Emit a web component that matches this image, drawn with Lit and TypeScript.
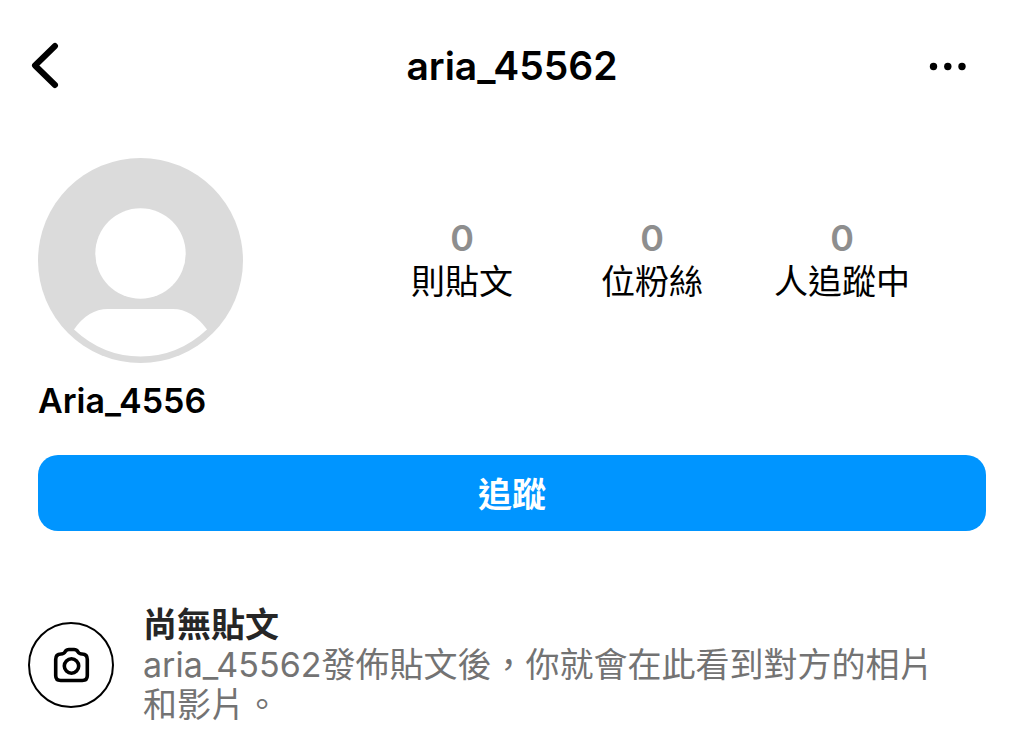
import { LitElement, html, css } from "lit";
import { customElement, state } from "lit/decorators.js";

@customElement("app-root")
export class AppRoot extends LitElement {
  @state() private stats = [
    { count: 0, label: "則貼文" },
    { count: 0, label: "位粉絲" },
    { count: 0, label: "人追蹤中" },
  ];

  static styles = css`
    :host {
      display: block;
      min-height: 100vh;
      box-sizing: border-box;
      background: #fff;
      color: #000;
      font-family: Inter, "Noto Sans CJK TC", sans-serif;
    }
    * { box-sizing: border-box; }
    h1, h2, h3, p, dl, dt, dd { margin: 0; }
    button {
      border: 0;
      padding: 0;
      background: none;
      color: inherit;
      font: inherit;
      cursor: pointer;
    }
    svg { display: block; }
    .top {
      display: grid;
      grid-template-columns: 68px 1fr 68px;
      align-items: center;
      height: 132px;
      padding: 0 28px;
    }
    .title { font-size: 39px; line-height: 48px; font-weight: 600; text-align: center; }
    .profile {
      display: grid;
      grid-template-columns: 205px 1fr;
      align-items: center;
      padding: 26px 38px 0;
    }
    .stats {
      display: grid;
      grid-template-columns: repeat(3, 190px);
      justify-content: end;
      padding: 0 49px 2px 0;
    }
    .stat { display: flex; flex-direction: column; align-items: center; }
    .count { font-size: 36px; line-height: 44px; font-weight: 600; color: #8e8e8e; }
    .label { font-size: 34px; line-height: 44px; white-space: nowrap; }
    .name { padding: 16px 38px 0; font-size: 34px; line-height: 44px; font-weight: 600; }
    .action { padding: 32px 38px 0; }
    .follow {
      display: block;
      width: 100%;
      height: 76px;
      padding-bottom: 2px;
      border-radius: 20px;
      background: #0095ff;
      color: #fff;
      font-size: 34px;
      font-weight: 600;
    }
    .empty {
      display: grid;
      grid-template-columns: 86px 1fr;
      gap: 29px;
      align-items: center;
      padding: 74px 68px 0 28px;
    }
    .empty-title { font-size: 34px; line-height: 40px; font-weight: 600; color: #262626; }
    .empty-text { font-size: 34px; line-height: 40px; color: #737373; }
  `;

  render() {
    return html`
      <header class="top">
        <button aria-label="返回">
          <svg width="34" height="48" viewBox="0 0 34 48" fill="none" stroke="#000" stroke-width="6" stroke-linecap="round" stroke-linejoin="round"><path d="M27 4 7 23.500 27 43" /></svg>
        </button>
        <h1 class="title">aria_45562</h1>
        <button aria-label="更多選項">
          <svg width="40" height="12" viewBox="0 0 40 12"><circle cx="5.500" cy="6.500" r="3.700" /><circle cx="19.800" cy="6.500" r="3.700" /><circle cx="34" cy="6.500" r="3.700" /></svg>
        </button>
      </header>
      <main>
        <section class="profile">
          <svg width="205" height="205" viewBox="0 0 205 205" role="img" aria-label="大頭貼照">
            <circle cx="102.500" cy="102.500" r="102.500" fill="#dbdbdb" />
            <circle cx="102.500" cy="95.500" r="45.200" fill="#fff" />
            <path d="M36 171.500Q50 151 70 151H135Q154 151 169 171.500Q140 198.500 102.500 198.500T36 171.500Z" fill="#fff" />
          </svg>
          <dl class="stats">
            ${this.stats.map((s) => html`<div class="stat"><dd class="count">${s.count}</dd><dt class="label">${s.label}</dt></div>`)}
          </dl>
        </section>
        <h2 class="name">Aria_4556</h2>
        <div class="action"><button class="follow">追蹤</button></div>
        <section class="empty">
          <svg width="86" height="86" viewBox="0 0 86 86" fill="none" stroke="#000" aria-hidden="true">
            <circle cx="43" cy="43" r="42" stroke-width="2" />
            <path d="M33 32Q36 32 37.300 29.500Q38.500 27.500 41 27.500H46Q48.500 27.500 49.700 29.500Q51 32 54 32Q59.300 32 59.300 37.500V53.500Q59.300 58.500 54.300 58.500H32.700Q27.700 58.500 27.700 53.500V37.500Q27.700 32 33 32Z" stroke-width="3.600" stroke-linejoin="round" />
            <circle cx="43.500" cy="44" r="7.200" stroke-width="3.600" />
          </svg>
          <div>
            <h3 class="empty-title">尚無貼文</h3>
            <p class="empty-text">aria_45562發佈貼文後，你就會在此看到對方的相片和影片。</p>
          </div>
        </section>
      </main>
    `;
  }
}
